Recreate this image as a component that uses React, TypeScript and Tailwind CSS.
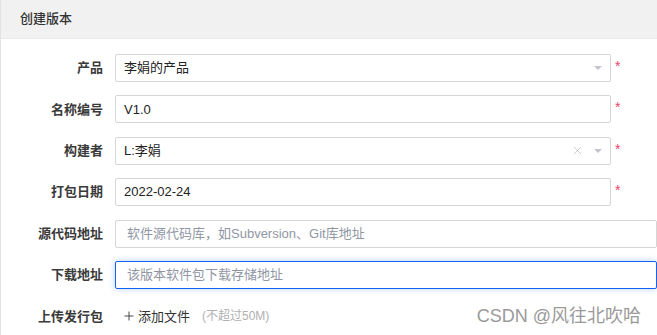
import { X, Plus } from "lucide-react";

const FONT = `"Liberation Sans", "Noto Sans CJK SC", sans-serif`;

function Caret() {
  return (
    <svg width="8" height="4" viewBox="0 0 8 4" className="shrink-0">
      <path d="M0 0 L8 0 L4 4 Z" fill="#c4c4cc" />
    </svg>
  );
}

function Star() {
  return <span className="ml-[4px] -mt-[4px] text-[14px] leading-none text-[#f0436a]">*</span>;
}

function Row({ label, children }: { label: string; children: React.ReactNode }) {
  return (
    <div className="flex h-[28px] items-center">
      <label className="w-[102px] shrink-0 text-right text-[13px] font-semibold text-[#3a3a3a]">
        {label}
      </label>
      <div className="ml-[12px] flex min-w-0 flex-1 items-center">{children}</div>
    </div>
  );
}

const box = "flex h-[28px] items-center rounded-[2px] border bg-white text-[13px]";
const filled = `${box} w-[496px] border-[#d6d6d6] px-[8px] text-[#222]`;

export default function App() {
  return (
    <div
      className="h-[335px] w-[657px] overflow-hidden border-l border-[#e3e3e3] bg-white"
      style={{ fontFamily: FONT }}
    >
      <div className="flex h-[39px] items-center border-b border-[#ebebeb] bg-[#f1f1f1] pl-[19px] text-[13px] font-medium text-[#333]">
        创建版本
      </div>

      <div className="flex flex-col gap-[13.4px] pt-[15px]">
        <Row label="产品">
          <div className={`${filled} justify-between`}>
            <span>李娟的产品</span>
            <Caret />
          </div>
          <Star />
        </Row>

        <Row label="名称编号">
          <div className={filled}>V1.0</div>
          <Star />
        </Row>

        <Row label="构建者">
          <div className={`${filled} justify-between`}>
            <span>L:李娟</span>
            <div className="flex items-center gap-[10px]">
              <X size={13} strokeWidth={1.4} color="#bdbdbd" />
              <Caret />
            </div>
          </div>
          <Star />
        </Row>

        <Row label="打包日期">
          <div className={filled}>2022-02-24</div>
          <Star />
        </Row>

        <Row label="源代码地址">
          <div className={`${box} w-[560px] border-[#d6d6d6] px-[11px] text-[#8f96a3]`}>
            软件源代码库，如Subversion、Git库地址
          </div>
        </Row>

        <Row label="下载地址">
          <div
            className={`${box} w-[560px] border-[#1463f0] px-[11px] text-[#8f96a3] shadow-[0_0_6px_rgba(20,100,240,0.3)]`}
          >
            该版本软件包下载存储地址
          </div>
        </Row>

        <Row label="上传发行包">
          <div className="flex items-center pl-[7px] text-[13px] text-[#333]">
            <Plus size={14} strokeWidth={1.5} />
            <span className="ml-[2px]">添加文件</span>
            <span className="ml-[12px] text-[12px] text-[#b0b0b0]">(不超过50M)</span>
          </div>
          <div className="ml-auto mr-[16px] text-[18px] text-[#9a9a9a]">
            CSDN @风往北吹哈
          </div>
        </Row>
      </div>
    </div>
  );
}
